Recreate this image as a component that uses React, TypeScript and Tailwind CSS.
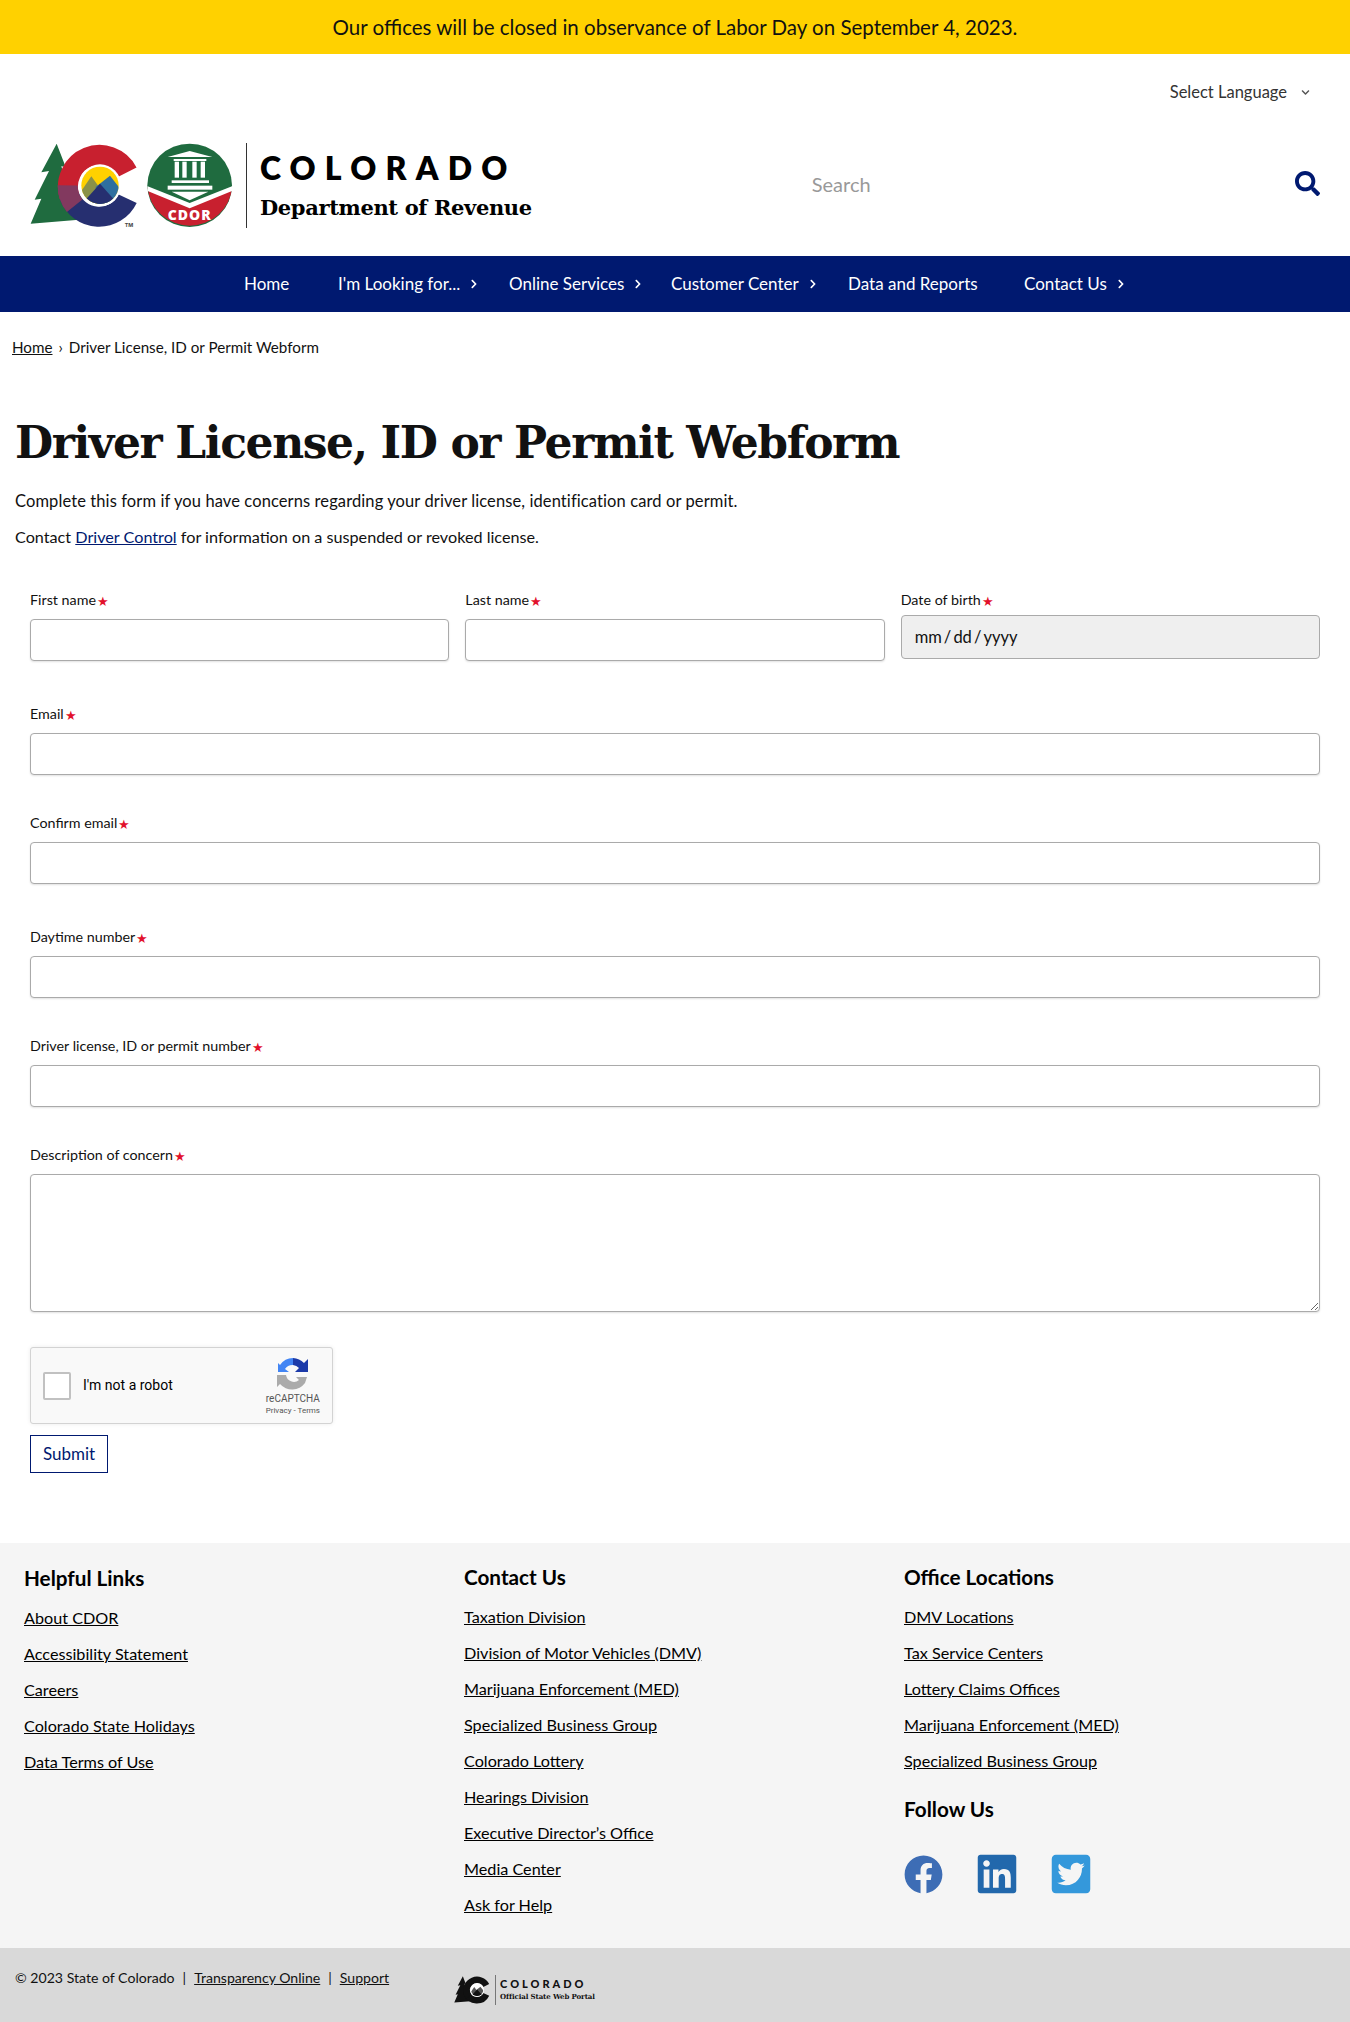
import React from "react";
import { FaFacebook, FaLinkedin, FaTwitterSquare, FaSearch, FaChevronRight, FaChevronDown } from "react-icons/fa";

function CoMark({ mono = false, cls }: { mono?: boolean; cls: string }) {
  const c = (x: string) => (mono ? "#111" : x);
  const id = mono ? "cm" : "cc";
  return (
    <svg viewBox="28 38 345 255" className={cls}>
      <path d="M108 40 L135 110 L122 108 L150 200 L132 196 L175 268 L30 280 L62 205 L42 208 L85 122 L62 126 Z" fill={c("#1f6b3f")} />
      <path d="M321 125 A95 95 0 0 0 146 197" fill="none" stroke={c("#c8202f")} strokeWidth="60" />
      <path d="M146 197 A95 95 0 0 0 321 205" fill="none" stroke={c("#262f70")} strokeWidth="60" />
      <path d="M141 165 A95 95 0 0 0 162 226" fill="none" stroke={c("#82395f")} strokeWidth="60" />
      <circle cx="238" cy="165" r="63" fill="#fff" />
      <clipPath id={id}><circle cx="238" cy="165" r="56" /></clipPath>
      <g clipPath={`url(#${id})`}>
        <rect x="170" y="100" width="140" height="130" fill={mono ? "#fff" : "#ffd100"} />
        <path d="M170 200 L212 138 L250 190 L240 230 L170 230Z" fill={mono ? "#555" : "#8a9148"} />
        <path d="M225 170 L268 136 L310 190 L300 230 L230 230Z" fill={mono ? "#555" : "#2f6f9f"} />
        <path d="M175 230 L238 160 L300 230Z" fill={c("#262f70")} />
      </g>
      {!mono && <text x="312" y="290" fontSize="16" fontFamily="Inter, sans-serif" fontWeight="700" fill="#444">TM</text>}
    </svg>
  );
}

function CdorMark() {
  return (
    <svg viewBox="382 38 258 255" className="w-[86px] h-[85px] ml-[2px] shrink-0">
      <ellipse cx="510" cy="165" rx="127" ry="125" fill="#1f6b3f" />
      <path d="M384 172 L510 222 L637 172 A127 125 0 0 1 384 172Z" fill="#c8202f" />
      <path d="M384 168 L510 218 L637 168 L637 182 L510 234 L384 182Z" fill="#fff" />
      <path d="M510 62 L578 80 L444 80Z" fill="#fff" />
      <rect x="462" y="86" width="98" height="6" fill="#fff" />
      <rect x="465" y="94" width="13" height="48" fill="#fff" />
      <rect x="488" y="94" width="13" height="48" fill="#fff" />
      <rect x="518" y="94" width="13" height="48" fill="#fff" />
      <rect x="543" y="94" width="13" height="48" fill="#fff" />
      <rect x="456" y="150" width="112" height="8" fill="#fff" />
      <rect x="444" y="166" width="134" height="12" fill="#fff" />
      <path d="M456 184 H566 L510 210Z" fill="#fff" />
      <text x="510" y="268" textAnchor="middle" fontSize="42" fontWeight="800" letterSpacing="3" fontFamily="'Open Sans', sans-serif" fill="#fff">CDOR</text>
    </svg>
  );
}

function Star() {
  return <span className="text-[#e2112c] text-[13px] ml-[1px] leading-none relative top-[1px]">★</span>;
}

function Field({ label, wrap, children }: { label: string; wrap: string; children: React.ReactNode }) {
  return (
    <div className={wrap}>
      <div className="text-[14.3px] leading-[18px] text-[#111] mb-[10px] flex items-center">{label}<Star /></div>
      {children}
    </div>
  );
}

const inputCls = "block w-full h-[42px] border border-[#aaaaaa] rounded-[4px] bg-white shadow-[0_1px_2px_rgba(0,0,0,0.12)]";

function Nav({ label, chev, w }: { label: string; chev?: boolean; w: string }) {
  return (
    <a className={`flex items-center text-white text-[17px] whitespace-nowrap ${w}`}>
      <span>{label}</span>
      {chev && <FaChevronRight className="ml-[10px] w-[8px] h-[10px] text-white" />}
    </a>
  );
}

function LinkList({ items }: { items: string[] }) {
  return (
    <ul className="mt-[15px] flex flex-col gap-[12px]">
      {items.map((t) => (
        <li key={t} className="text-[16.2px] leading-[24px]"><a className="underline text-black">{t}</a></li>
      ))}
    </ul>
  );
}

export default function App() {
  return (
    <div className="w-[1350px] h-[2022px] bg-white text-black overflow-hidden flex flex-col" style={{ fontFamily: "Lato, sans-serif" }}>
      <div className="h-[54px] bg-[#ffd100] flex items-center justify-center text-[20.5px] text-[#111]">
        Our offices will be closed in observance of Labor Day on September 4, 2023.
      </div>

      <div className="h-[202px] flex flex-col">
        <div className="flex justify-end items-center pr-[40px] pt-[26px] h-[50px] text-[16.5px] text-[#333]">
          <span>Select Language</span>
          <FaChevronDown className="ml-[14px] w-[9px] h-[9px] text-[#555]" />
        </div>
        <div className="flex items-start pl-[30px] pr-[30px] mt-[39px]">
          <CoMark cls="w-[115px] h-[85px] shrink-0" />
          <CdorMark />
          <div className="h-[85px] w-px bg-[#333] ml-[13px]" />
          <div className="ml-[13px] flex flex-col">
            <div className="text-[32px] leading-[36px] font-extrabold tracking-[0.287em] mt-[7px] whitespace-nowrap">COLORADO</div>
            <div className="text-[21px] leading-[28px] font-bold mt-[8px] tracking-[-0.35px] whitespace-nowrap" style={{ fontFamily: "'DejaVu Serif', serif" }}>Department of Revenue</div>
          </div>
          <div className="flex-1 flex items-center justify-between h-[85px] ml-[280px]">
            <span className="text-[20px] text-[#999] relative -top-[2px]">Search</span>
            <FaSearch className="w-[25px] h-[25px] text-[#001970] relative -top-[2px]" />
          </div>
        </div>
      </div>

      <nav className="h-[56px] bg-[#001970] flex items-center pl-[244px]">
        <Nav label="Home" w="w-[94px]" />
        <Nav label="I'm Looking for..." chev w="w-[171px]" />
        <Nav label="Online Services" chev w="w-[162px]" />
        <Nav label="Customer Center" chev w="w-[177px]" />
        <Nav label="Data and Reports" w="w-[176px]" />
        <Nav label="Contact Us" chev w="w-[120px]" />
      </nav>

      <div className="pl-[12px] mt-[25px] h-[20px] flex items-center text-[15.2px] text-[#111]">
        <a className="underline">Home</a>
        <span className="mx-[6px]">›</span>
        <span>Driver License, ID or Permit Webform</span>
      </div>

      <h1 className="pl-[15px] mt-[56px] text-[44px] tracking-[-1.4px] leading-[60px] font-bold text-[#111]" style={{ fontFamily: "'DejaVu Serif', serif" }}>Driver License, ID or Permit Webform</h1>

      <div className="pl-[15px] mt-[16px] text-[#111]">
        <p className="leading-[24px] text-[16.5px] tracking-[0.1px]">Complete this form if you have concerns regarding your driver license, identification card or permit.</p>
        <p className="leading-[24px] mt-[12px] text-[16.2px]">Contact <a className="underline text-[#001970]">Driver Control</a> for information on a suspended or revoked license.</p>
      </div>

      <form className="px-[30px] mt-[42px]">
        <div className="grid grid-cols-3 gap-x-[16px] items-start">
          <Field label="First name" wrap=""><input className={inputCls} /></Field>
          <Field label="Last name" wrap=""><input className={inputCls} /></Field>
          <Field label="Date of birth" wrap="">
            <input readOnly defaultValue={"mm\u2009/\u2009dd\u2009/\u2009yyyy"} className="block w-full h-[44px] -mt-[4px] border border-[#aaaaaa] rounded-[4px] bg-[#efefef] px-[13px] text-[16.5px] text-[#111]" />
          </Field>
        </div>
        <Field label="Email" wrap="mt-[44px]"><input className={inputCls} /></Field>
        <Field label="Confirm email" wrap="mt-[39px]"><input className={inputCls} /></Field>
        <Field label="Daytime number" wrap="mt-[44px]"><input className={inputCls} /></Field>
        <Field label="Driver license, ID or permit number" wrap="mt-[39px]"><input className={inputCls} /></Field>
        <Field label="Description of concern" wrap="mt-[39px]">
          <textarea className="block w-full h-[138px] border border-[#aaaaaa] rounded-[4px] bg-white shadow-[0_1px_2px_rgba(0,0,0,0.12)]" />
        </Field>

        <div className="mt-[35px] w-[303px] h-[77px] bg-[#f9f9f9] border border-[#d3d3d3] rounded-[3px] shadow-[0_0_4px_rgba(0,0,0,0.08)] flex items-center pl-[12px] relative" style={{ fontFamily: "Roboto, sans-serif" }}>
          <div className="w-[28px] h-[28px] bg-white border-2 border-[#c1c1c1] rounded-[2px]" />
          <span className="ml-[12px] text-[14px] text-black">I'm not a robot</span>
          <div className="absolute right-[12px] top-[10px] flex flex-col items-center">
            <svg viewBox="0 0 32 32" className="w-[32px] h-[32px]">
              <path d="M16 0 A16 16 0 0 1 27 5 L31 1 L31 14 L18 14 L22 10 A9 9 0 0 0 16 7Z" fill="#1c3aa9" />
              <path d="M16 0 A16 16 0 0 0 3 7 L1 5 L1 14 L12 14 L8 11 A9 9 0 0 1 16 7Z" fill="#4285f4" />
              <path d="M0 17 L9 17 A8 8 0 0 0 22 22 L19 19 L30 19 L28 25 A16 16 0 0 1 3 26 L0 29Z" fill="#ababab" />
            </svg>
            <span className="text-[10px] leading-[12px] text-[#555] mt-[3px]">reCAPTCHA</span>
            <span className="text-[8px] leading-[11px] text-[#555]">Privacy - Terms</span>
          </div>
        </div>

        <button type="button" className="mt-[11px] block w-[78px] h-[38px] border border-[#001970] text-[#001970] text-[17px] bg-white">Submit</button>
      </form>

      <footer className="mt-[70px] h-[405px] bg-[#f5f5f5] pl-[24px] pt-[21px] grid grid-cols-[440px_440px_1fr]">
        <div className="pt-[1px]">
          <h2 className="text-[20.7px] leading-[26px] font-bold">Helpful Links</h2>
          <LinkList items={["About CDOR", "Accessibility Statement", "Careers", "Colorado State Holidays", "Data Terms of Use"]} />
        </div>
        <div>
          <h2 className="text-[20.7px] leading-[26px] font-bold">Contact Us</h2>
          <LinkList items={["Taxation Division", "Division of Motor Vehicles (DMV)", "Marijuana Enforcement (MED)", "Specialized Business Group", "Colorado Lottery", "Hearings Division", "Executive Director’s Office", "Media Center", "Ask for Help"]} />
        </div>
        <div>
          <h2 className="text-[20.7px] leading-[26px] font-bold">Office Locations</h2>
          <LinkList items={["DMV Locations", "Tax Service Centers", "Lottery Claims Offices", "Marijuana Enforcement (MED)", "Specialized Business Group"]} />
          <h2 className="text-[20.7px] leading-[26px] font-bold mt-[23px]">Follow Us</h2>
          <div className="flex mt-[30px] items-center">
            <FaFacebook className="w-[39px] h-[39px] text-[#3d6db5]" />
            <FaLinkedin className="w-[44px] h-[44px] text-[#2268ac] ml-[32px]" />
            <FaTwitterSquare className="w-[44px] h-[44px] text-[#3498db] ml-[30px]" />
          </div>
        </div>
      </footer>

      <div className="flex-1 bg-[#d9d9d9] flex items-start pl-[15px] pt-[19px] text-[14.1px] text-[#111]">
        <span>© 2023 State of Colorado</span>
        <span className="mx-[8px]">|</span>
        <a className="underline">Transparency Online</a>
        <span className="mx-[8px]">|</span>
        <a className="underline">Support</a>
        <div className="ml-[65px] flex items-center h-[34px] mt-[6px]">
          <CoMark mono cls="w-[38px] h-[28px] shrink-0" />
          <div className="w-px h-[30px] bg-[#777] ml-[3px]" />
          <div className="ml-[4px] flex flex-col">
            <span className="text-[11px] leading-[14px] font-black tracking-[0.27em]">COLORADO</span>
            <span className="text-[7px] leading-[12px] font-bold tracking-[-0.1px]" style={{ fontFamily: "'DejaVu Serif', serif" }}>Official State Web Portal</span>
          </div>
        </div>
      </div>
    </div>
  );
}
